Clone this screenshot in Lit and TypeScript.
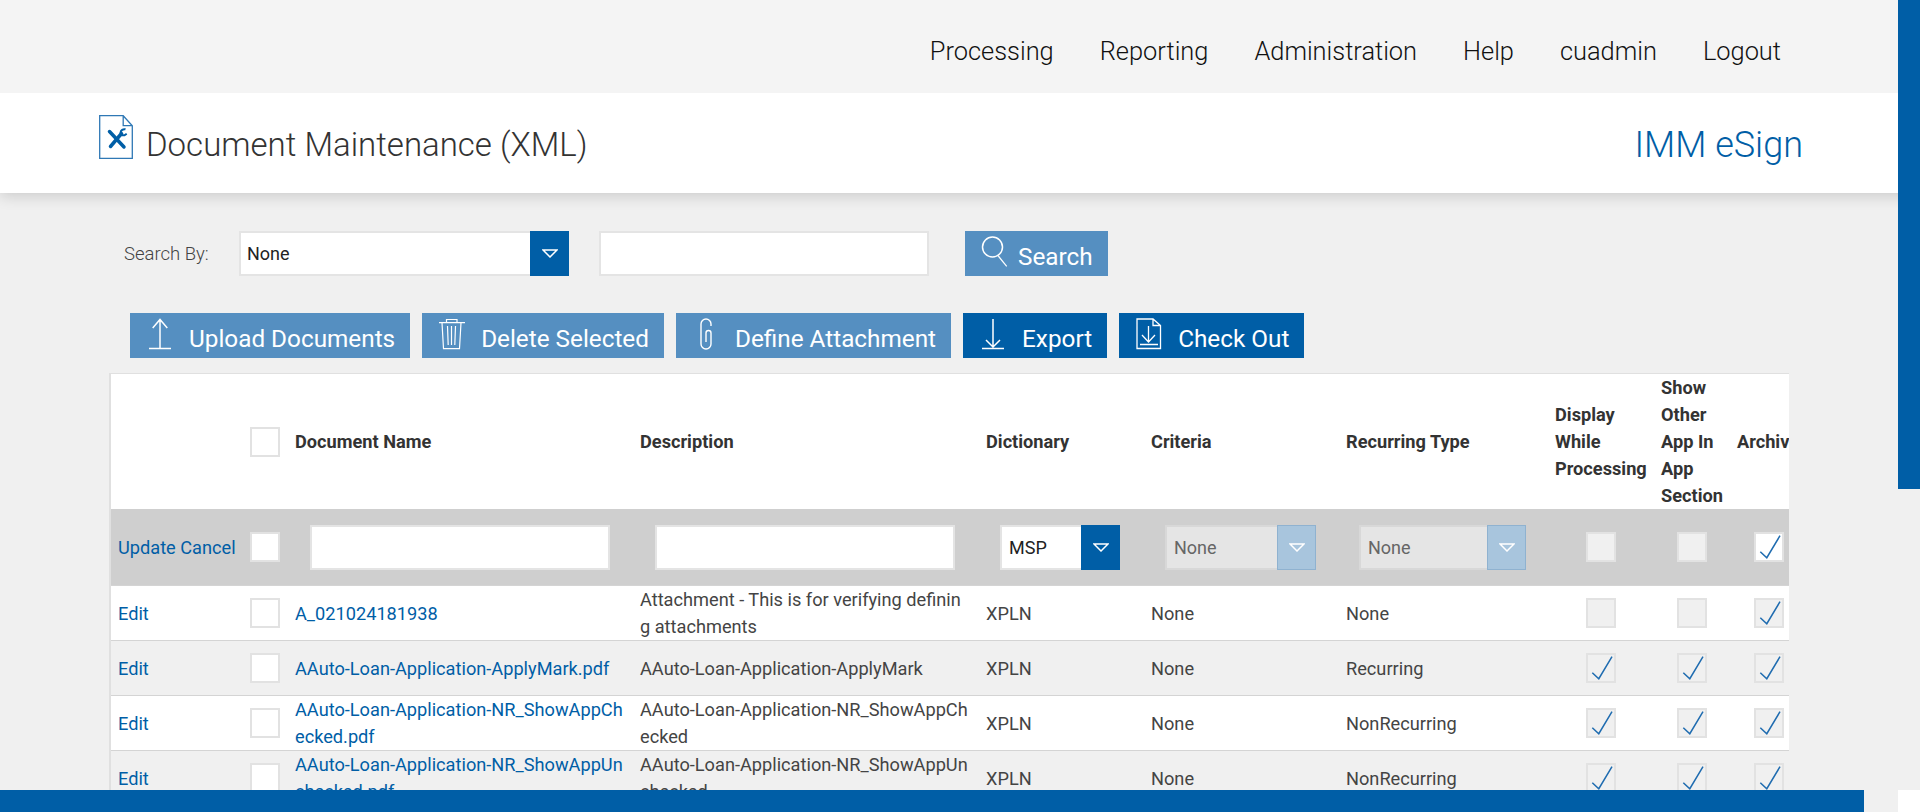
import { LitElement, html, css, svg } from "lit";
import { customElement } from "lit/decorators.js";

const caret = html`<svg class="caret" width="16" height="9" viewBox="0 0 16 9"><path d="M1 1h14L8 8z" fill="none" stroke="#fff" stroke-width="1.5"/></svg>`;

const icons: Record<string, unknown> = {
  upload: svg`<path d="M22.7 15 30 6.5l7.3 8.5M30 7v28M19 35.5h22" fill="none" stroke="#fff" stroke-width="1.5"/>`,
  trash: svg`<g fill="none" stroke="#fff" stroke-width="1.2"><path d="M17 9.7h26M24.5 9.7V6.5h10.5v3.2M20 9.7l1.5 26h16l1.5-26M25.5 13l.7 19M29.5 13v19M33.5 13l-.7 19"/></g>`,
  clip: svg`<path d="M35 13v-2a5 5 0 0 0-10 0v20a5 5 0 0 0 10 0V20a2.500 2.500 0 0 0-5 0v9" fill="none" stroke="#fff" stroke-width="1.400"/>`,
  export: svg`<path d="M30 6v28M23 27l7 7 7-7M19 35.500h22" fill="none" stroke="#fff" stroke-width="1.500"/>`,
  checkout: svg`<g fill="none" stroke="#fff" stroke-width="1.300"><path d="M18 6h16l7.500 6.500v23H18zM34 6v6.500h7.500"/><path d="M29.500 13v16M23 22l6.500 7 6.500-7M21 31.500h18"/></g>`,
  search: svg`<g fill="none" stroke="#fff" stroke-width="1.500"><circle cx="27.500" cy="16" r="10"/><path d="M33.300 25l8.400 10.300" stroke-width="1.200"/></g>`,
};

const check = html`<svg class="tick" width="30" height="30" viewBox="0 0 30 30"><path d="M6.300 19.700l6.500 6L26 3.700" fill="none" stroke="#1f6cb0" stroke-width="1.500"/></svg>`;

interface Row {
  name: string;
  desc: string;
  rec: string;
  flags: [boolean, boolean, boolean];
}

const rows: Row[] = [
  { name: "A_021024181938", desc: "Attachment - This is for verifying defining attachments", rec: "None", flags: [false, false, true] },
  { name: "AAuto-Loan-Application-ApplyMark.pdf", desc: "AAuto-Loan-Application-ApplyMark", rec: "Recurring", flags: [true, true, true] },
  { name: "AAuto-Loan-Application-NR_ShowAppChecked.pdf", desc: "AAuto-Loan-Application-NR_ShowAppChecked", rec: "NonRecurring", flags: [true, true, true] },
  { name: "AAuto-Loan-Application-NR_ShowAppUnchecked.pdf", desc: "AAuto-Loan-Application-NR_ShowAppUnchecked", rec: "NonRecurring", flags: [true, true, true] },
];

@customElement("app-root")
export class AppRoot extends LitElement {
  static styles = css`
    :host { display: block; position: relative; height: 812px; overflow: hidden; background: #f0f0f0; font-family: Roboto, "Liberation Sans", sans-serif; color: #444; }
    .topbar { height: 93px; background: #f4f4f4; display: flex; justify-content: flex-end; align-items: center; gap: 46px; padding: 8px 139px 0 0; box-sizing: border-box; font-size: 25.4px; font-weight: 300; color: #111; position: relative; z-index: 1; }
    .titlebar { height: 100px; background: #fff; box-shadow: 0 3px 14px rgba(0,0,0,.16); display: flex; align-items: flex-start; padding: 22px 117px 0 99px; box-sizing: border-box; }
    .title { font-size: 33px; font-weight: 300; color: #333; margin: 8px 0 0 13px; line-height: 44px; }
    .brand { margin: 8px 0 0 auto; font-size: 36px; font-weight: 300; color: #005ea6; line-height: 44px; }
    .main { padding: 38px 0 0 109px; }
    .search { display: flex; align-items: center; height: 45px; }
    .search label { font-size: 18.500px; font-weight: 300; width: 115px; margin-left: 15px; color: #444; }
    .select { display: flex; box-sizing: border-box; background: #fff; border: 2px solid #e4e4e4; height: 45px; align-items: center; font-size: 18px; color: #222; padding-left: 6px; position: relative; }
    .select b { position: absolute; top: -2px; right: -2px; bottom: -2px; width: 39px; background: #005ea6; display: flex; align-items: center; justify-content: center; font-weight: 400; }
    .select.big { width: 330px; }
    .input { display: block; box-sizing: border-box; height: 45px; background: #fff; border: 2px solid #e4e4e4; }
    .input.big { width: 330px; margin-left: 30px; }
    .btn { height: 45px; display: flex; background: #558fc1; color: #fff; font-size: 24.300px; padding-right: 15px; box-sizing: border-box; flex: none; }
    .btn.dark { background: #005ea6; }
    .btn svg { display: block; flex: none; }
    .btn span { padding-top: 6px; line-height: 40px; white-space: nowrap; }
    .search .btn { margin-left: 36px; }
    .actions { display: flex; gap: 12px; margin: 37px 0 15px 21px; }
    .wrap { width: 1680px; overflow: hidden; background: #fff; border-top: 1px solid #e0e0e0; border-left: 2px solid #e0e0e0; box-sizing: border-box; }
    table { border-collapse: separate; border-spacing: 0; table-layout: fixed; width: 1696px; font-size: 18.200px; line-height: 27px; }
    th { text-align: left; font-weight: 700; color: #333; padding: 0 8px; height: 135px; box-sizing: border-box; overflow: hidden; white-space: normal; }
    td { padding: 0 8px; height: 55px; box-sizing: border-box; border-top: 1px solid #d4d4d4; vertical-align: middle; word-break: break-all; overflow: hidden; }
    td:first-child { padding-left: 7px; }
    tr.edit td { background: #cfcfcf; height: 76px; border-top: none; }
    tr.even td { background: #f0f0f0; }
    a { color: #005ea6; text-decoration: none; }
    .nowrap { white-space: nowrap; word-break: normal; }
    .box { display: block; width: 30px; height: 30px; box-sizing: border-box; border: 2px solid #e2e2e2; background: #fff; position: relative; }
    .box.gray { background: #f0f0f0; }
    .box .tick { position: absolute; left: -2px; top: -2px; }
    td.flag { padding: 0 7px 0 9px; }
    .flag .box { margin: 0 auto; }
    .cellinput { display: block; box-sizing: border-box; height: 45px; background: #fff; border: 2px solid #e4e4e4; width: 300px; margin-left: 15px; }
    .sel-dict { width: 120px; margin-left: 14px; }
    .sel-crit { width: 151px; margin-left: 14px; }
    .sel-rec { width: 167px; margin-left: 13px; }
    td .select { padding-left: 7px; }
    .select.off { background: #e5e5e5; color: #666; border-color: #d8d8d8; }
    .select.off b { background: #a8c5dd; border: 1px solid #8fb2d0; box-sizing: border-box; }
    .vbar { position: absolute; right: 0; top: 0; width: 22px; height: 489px; background: #005ea6; z-index: 2; }
    .hbar { position: absolute; left: 0; bottom: 0; width: 1864px; height: 22px; background: #005ea6; z-index: 2; }
    .corner { position: absolute; right: 0; bottom: 0; width: 22px; height: 22px; background: #fff; z-index: 2; }
  `;

  private btn(icon: string, label: string, dark = false, w = 59) {
    return html`<div class="btn ${dark ? "dark" : ""}"><svg width=${w} height="45" viewBox="0 0 ${w} 45">${icons[icon]}</svg><span>${label}</span></div>`;
  }

  private box(checked: boolean, gray: boolean) {
    return html`<div class="box ${gray ? "gray" : ""}">${checked ? check : ""}</div>`;
  }

  render() {
    return html`
      <div class="topbar">
        ${["Processing", "Reporting", "Administration", "Help", "cuadmin", "Logout"].map((t) => html`<span>${t}</span>`)}
      </div>
      <div class="titlebar">
        <svg width="34" height="44" viewBox="0 0 34 44">
          <path d="M.7.7h23.500l9.100 10v32.600H.7zM24.200.7v10h9.100" fill="#fff" stroke="#2f78b5" stroke-width="1.300"/>
          <g fill="none" stroke="#005ea6">
            <path d="M10.500 16.500 25 32" stroke-width="3.500" stroke-linecap="round"/>
            <path d="M22.500 18.500 11.500 31.500" stroke-width="3.500" stroke-linecap="round"/>
            <path d="M26.500 14.300a4 4 0 0 0-5 3.500l1.500 2.500h2.500l2.200-1.600" stroke-width="2"/>
          </g>
        </svg>
        <div class="title">Document Maintenance (XML)</div>
        <div class="brand">IMM eSign</div>
      </div>
      <div class="main">
        <div class="search">
          <label>Search By:</label>
          <div class="select big">None<b>${caret}</b></div>
          <div class="input big"></div>
          ${this.btn("search", "Search", false, 53)}
        </div>
        <div class="actions">
          ${this.btn("upload", "Upload Documents")}
          ${this.btn("trash", "Delete Selected")}
          ${this.btn("clip", "Define Attachment")}
          ${this.btn("export", "Export", true)}
          ${this.btn("checkout", "Check Out", true)}
        </div>
        <div class="wrap">
          <table>
            <colgroup>
              <col style="width:131px" /><col style="width:45px" /><col style="width:345px" /><col style="width:346px" />
              <col style="width:165px" /><col style="width:195px" /><col style="width:209px" /><col style="width:106px" />
              <col style="width:76px" /><col style="width:78px" />
            </colgroup>
            <thead>
              <tr>
                <th></th>
                <th>${this.box(false, false)}</th>
                <th>Document Name</th>
                <th>Description</th>
                <th>Dictionary</th>
                <th>Criteria</th>
                <th>Recurring Type</th>
                <th>Display While Processing</th>
                <th>Show Other App In App Section</th>
                <th class="nowrap">Archive</th>
              </tr>
            </thead>
            <tbody>
              <tr class="edit">
                <td class="nowrap"><a>Update Cancel</a></td>
                <td>${this.box(false, false)}</td>
                <td><div class="cellinput"></div></td>
                <td><div class="cellinput"></div></td>
                <td><div class="select sel-dict">MSP<b>${caret}</b></div></td>
                <td><div class="select off sel-crit">None<b>${caret}</b></div></td>
                <td><div class="select off sel-rec">None<b>${caret}</b></div></td>
                <td class="flag">${this.box(false, true)}</td>
                <td class="flag">${this.box(false, true)}</td>
                <td class="flag">${this.box(true, false)}</td>
              </tr>
              ${rows.map(
                (r, i) => html`
                  <tr class=${i % 2 ? "even" : ""}>
                    <td><a>Edit</a></td>
                    <td>${this.box(false, false)}</td>
                    <td><a>${r.name}</a></td>
                    <td>${r.desc}</td>
                    <td>XPLN</td>
                    <td>None</td>
                    <td>${r.rec}</td>
                    <td class="flag">${this.box(r.flags[0], true)}</td>
                    <td class="flag">${this.box(r.flags[1], true)}</td>
                    <td class="flag">${this.box(r.flags[2], true)}</td>
                  </tr>
                `
              )}
            </tbody>
          </table>
        </div>
      </div>
      <div class="vbar"></div>
      <div class="hbar"></div>
      <div class="corner"></div>
    `;
  }
}
